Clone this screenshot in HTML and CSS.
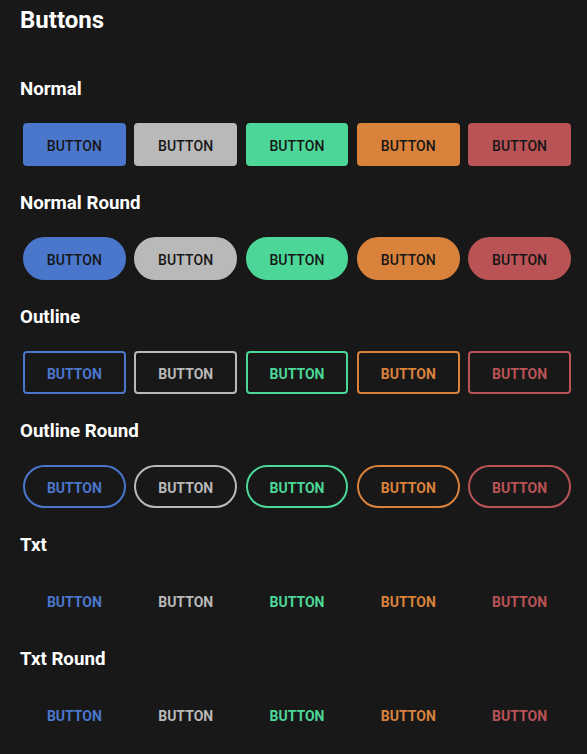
FILE: index.html
```html
<!DOCTYPE html>
<html>
<head>
<meta charset="utf-8">
<link rel="stylesheet" href="styles.css">
</head>
<body>
<div class="page">
  <h1 class="title">Buttons</h1>

  <section class="section">
    <h2 class="heading">Normal</h2>
    <div class="row">
      <button class="btn normal blue">BUTTON</button>
      <button class="btn normal gray">BUTTON</button>
      <button class="btn normal green">BUTTON</button>
      <button class="btn normal orange">BUTTON</button>
      <button class="btn normal red">BUTTON</button>
    </div>
  </section>

  <section class="section">
    <h2 class="heading">Normal Round</h2>
    <div class="row">
      <button class="btn normal round blue">BUTTON</button>
      <button class="btn normal round gray">BUTTON</button>
      <button class="btn normal round green">BUTTON</button>
      <button class="btn normal round orange">BUTTON</button>
      <button class="btn normal round red">BUTTON</button>
    </div>
  </section>

  <section class="section">
    <h2 class="heading">Outline</h2>
    <div class="row">
      <button class="btn outline blue">BUTTON</button>
      <button class="btn outline gray">BUTTON</button>
      <button class="btn outline green">BUTTON</button>
      <button class="btn outline orange">BUTTON</button>
      <button class="btn outline red">BUTTON</button>
    </div>
  </section>

  <section class="section">
    <h2 class="heading">Outline Round</h2>
    <div class="row">
      <button class="btn outline round blue">BUTTON</button>
      <button class="btn outline round gray">BUTTON</button>
      <button class="btn outline round green">BUTTON</button>
      <button class="btn outline round orange">BUTTON</button>
      <button class="btn outline round red">BUTTON</button>
    </div>
  </section>

  <section class="section">
    <h2 class="heading">Txt</h2>
    <div class="row">
      <button class="btn txt blue">BUTTON</button>
      <button class="btn txt gray">BUTTON</button>
      <button class="btn txt green">BUTTON</button>
      <button class="btn txt orange">BUTTON</button>
      <button class="btn txt red">BUTTON</button>
    </div>
  </section>

  <section class="section">
    <h2 class="heading">Txt Round</h2>
    <div class="row">
      <button class="btn txt round blue">BUTTON</button>
      <button class="btn txt round gray">BUTTON</button>
      <button class="btn txt round green">BUTTON</button>
      <button class="btn txt round orange">BUTTON</button>
      <button class="btn txt round red">BUTTON</button>
    </div>
  </section>
</div>
</body>
</html>
```
FILE: styles.css
```css
html, body {
  margin: 0;
  padding: 0;
  background: #181818;
}

body {
  font-family: Roboto, "Liberation Sans", sans-serif;
  color: #ffffff;
}

.page {
  padding: 6px 16px 0 20px;
}

.title {
  margin: 0;
  font-size: 24px;
  line-height: 28px;
  font-weight: 700;
}

.section {
  padding-top: 44px;
}

.section + .section {
  padding-top: 26px;
}

.heading {
  margin: 0;
  font-size: 18.72px;
  line-height: 22px;
  font-weight: 700;
}

.row {
  margin: 23px 0 0 3px;
  display: grid;
  grid-template-columns: repeat(5, 1fr);
  column-gap: 8.5px;
}

.btn {
  box-sizing: border-box;
  height: 43px;
  margin: 0;
  padding: 2px 0 0 0;
  border: 2px solid transparent;
  border-radius: 4px;
  background: transparent;
  font-family: Roboto, "Liberation Sans", sans-serif;
  font-size: 14px;
  font-weight: 700;
  letter-spacing: 0;
  display: flex;
  align-items: center;
  justify-content: center;
}

.round {
  border-radius: 22px;
}

.normal {
  color: #161616;
  font-weight: 500;
  letter-spacing: 0.1px;
}
.normal.blue { background: #4a76cc; border-color: #4a76cc; }
.normal.gray { background: #b9b9b9; border-color: #b9b9b9; }
.normal.green { background: #4cd697; border-color: #4cd697; }
.normal.orange { background: #d9823c; border-color: #d9823c; }
.normal.red { background: #b95356; border-color: #b95356; }

.outline.blue, .txt.blue { color: #4a76cc; }
.outline.gray, .txt.gray { color: #b9b9b9; }
.outline.green, .txt.green { color: #4cd697; }
.outline.orange, .txt.orange { color: #d9823c; }
.outline.red, .txt.red { color: #b95356; }

.outline.blue { border-color: #4a76cc; }
.outline.gray { border-color: #b9b9b9; }
.outline.green { border-color: #4cd697; }
.outline.orange { border-color: #d9823c; }
.outline.red { border-color: #b95356; }
```
